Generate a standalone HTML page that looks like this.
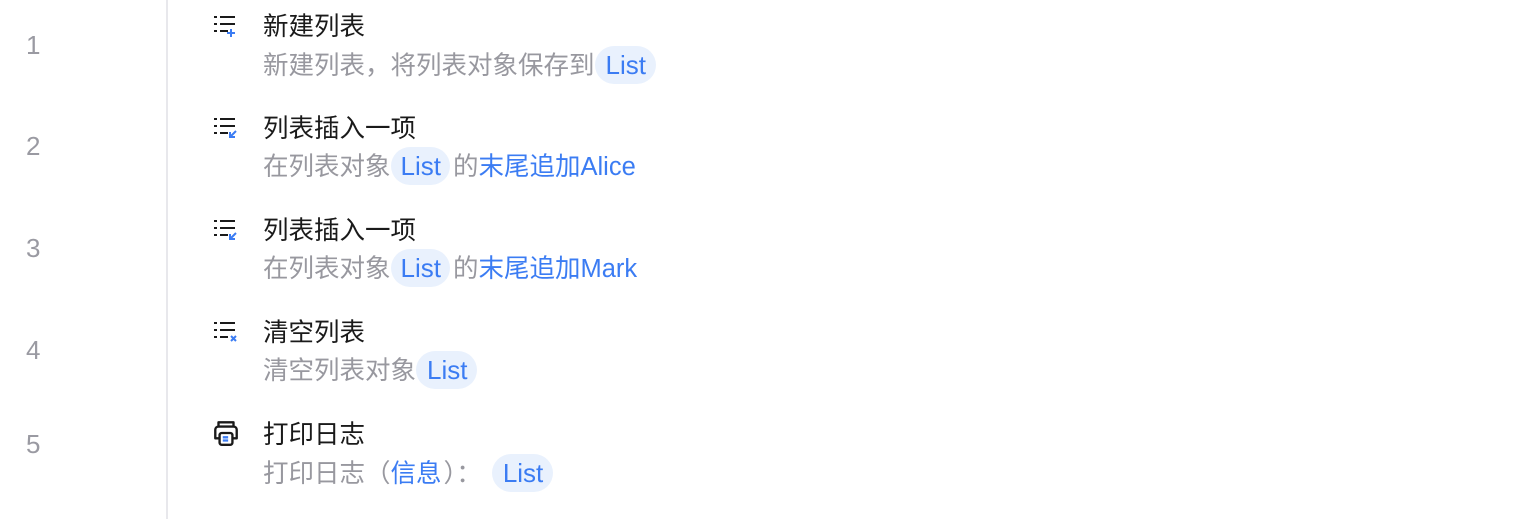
<!DOCTYPE html>
<html><head><meta charset="utf-8"><style>
body{margin:0;width:1523px;height:519px;background:#fff;font-family:"Liberation Sans","Noto Sans CJK SC",sans-serif;position:relative;overflow:hidden}
.div{position:absolute;left:166px;top:0;width:2px;height:519px;background:#e8e8ec}
.num{position:absolute;left:26px;width:20px;font-size:26px;color:#9a9aa2;line-height:30px}
.t{position:absolute;left:263px;font-size:25.5px;color:#1a1a1a;line-height:30px;white-space:nowrap}
.d{position:absolute;left:263px;font-size:25.5px;color:#98989f;line-height:38px;white-space:nowrap}
.b{color:#3b7cf3}
.p{display:inline-block;background:#e9f1fd;color:#3b7cf3;border-radius:19px;padding:0 10px 0 11px;height:38px;line-height:38px;font-size:26px}
.c{font-family:"Noto Sans CJK SC",sans-serif}
svg{position:absolute;left:212px}
</style></head><body>
<div class="div"></div>
<div class="num" style="top:30px">1</div>
<div class="num" style="top:131px">2</div>
<div class="num" style="top:233px">3</div>
<div class="num" style="top:335px">4</div>
<div class="num" style="top:429px">5</div>

<svg style="top:14px" width="28" height="24" viewBox="0 0 28 24" fill="none" stroke="#1a1a1a" stroke-width="2"><path d="M2 3h3M2 10h3M2 17h3M8 3h15M8 10h15M8 17h8" /><path d="M19 15v8M15 19h8" stroke="#3b7cf3"/></svg>
<div class="t" style="top:12px">新建列表</div>
<div class="d" style="top:45px">新建列表<span class="c">，</span>将列表对象保存到<span class="p">List</span></div>

<svg style="top:116px" width="28" height="24" viewBox="0 0 28 24" fill="none" stroke="#1a1a1a" stroke-width="2"><path d="M2 3h3M2 10h3M2 17h3M8 3h15M8 10h15M8 17h8"/><path d="M24 15l-6 6M18 16v5h5" stroke="#3b7cf3"/></svg>
<div class="t" style="top:114px">列表插入一项</div>
<div class="d" style="top:147px">在列表对象<span class="p" style="padding:0 9px 0 10px">List</span><span style="margin-left:3px">的</span><span class="b">末尾追加Alice</span></div>

<svg style="top:218px" width="28" height="24" viewBox="0 0 28 24" fill="none" stroke="#1a1a1a" stroke-width="2"><path d="M2 3h3M2 10h3M2 17h3M8 3h15M8 10h15M8 17h8"/><path d="M24 15l-6 6M18 16v5h5" stroke="#3b7cf3"/></svg>
<div class="t" style="top:216px">列表插入一项</div>
<div class="d" style="top:249px">在列表对象<span class="p" style="padding:0 9px 0 10px">List</span><span style="margin-left:3px">的</span><span class="b">末尾追加Mark</span></div>

<svg style="top:320px" width="28" height="24" viewBox="0 0 28 24" fill="none" stroke="#1a1a1a" stroke-width="2"><path d="M2 3h3M2 10h3M2 17h3M8 3h15M8 10h15M8 17h8"/><path d="M19 16l5 5M24 16l-5 5" stroke="#3b7cf3"/></svg>
<div class="t" style="top:318px">清空列表</div>
<div class="d" style="top:351px">清空列表对象<span class="p">List</span></div>

<svg style="top:418px;left:211px" width="30" height="30" viewBox="0 0 28 28" fill="none" stroke="#1a1a1a" stroke-width="2.2" stroke-linejoin="round"><path d="M7 8V4h14v4"/><path d="M7 19H4V11a3 3 0 0 1 3-3h14a3 3 0 0 1 3 3v8h-3"/><rect x="8" y="14" width="12" height="11" rx="2"/><path d="M11 18h5M11 21h5" stroke="#3b7cf3"/></svg>
<div class="t" style="top:420px">打印日志</div>
<div class="d" style="top:453px">打印日志<span class="c">（</span><span class="b">信息</span><span class="c" style="margin-left:2px">）：</span><span style="margin-left:10px"></span><span class="p">List</span></div>
</body></html>
